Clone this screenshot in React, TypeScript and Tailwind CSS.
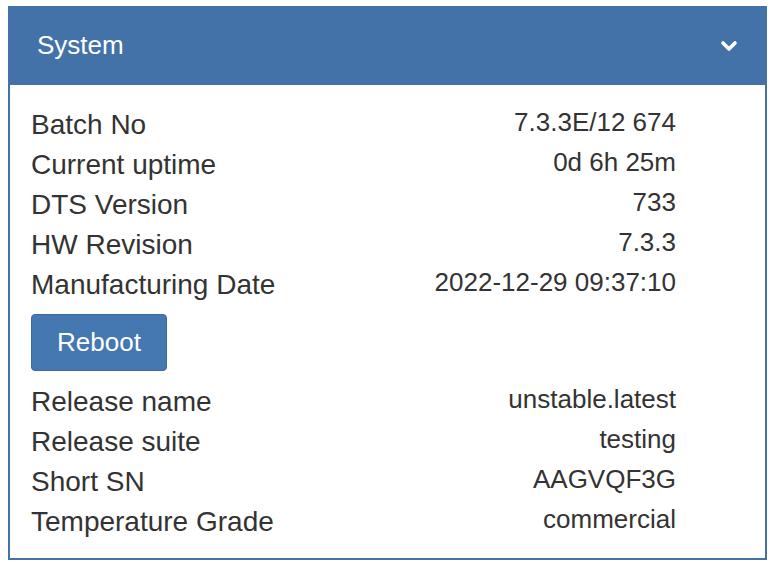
import React from "react";

const rows1: [string, string][] = [
  ["Batch No", "7.3.3E/12 674"],
  ["Current uptime", "0d 6h 25m"],
  ["DTS Version", "733"],
  ["HW Revision", "7.3.3"],
  ["Manufacturing Date", "2022-12-29 09:37:10"],
];
const rows2: [string, string][] = [
  ["Release name", "unstable.latest"],
  ["Release suite", "testing"],
  ["Short SN", "AAGVQF3G"],
  ["Temperature Grade", "commercial"],
];

function Rows({ rows }: { rows: [string, string][] }) {
  return (
    <div className="flex flex-col w-[645px]">
      {rows.map(([k, v]) => (
        <div key={k} className="h-[40px] flex items-center justify-between">
          <span className="text-[28px]">{k}</span>
          <span className="text-[26px] mb-[5px]">{v}</span>
        </div>
      ))}
    </div>
  );
}

export default function App() {
  return (
    <div className="w-[778px] h-[572px] bg-white pt-[6px] pl-[8px]" style={{ fontFamily: '"Liberation Sans", Arial, sans-serif' }}>
      <div className="w-[759px] h-[554px] border-2 border-[#4372a9] flex flex-col">
        <div className="bg-[#4372a9] flex items-center justify-between pl-[29px] pr-[29px] text-white text-[26px] -mt-[2px] -mx-[2px] h-[79px]">
          <span>System</span>
          <svg width="18" height="14" viewBox="0 0 18 14">
            <path d="M3 4 L9 10 L15 4" stroke="white" strokeWidth="3.6" fill="none" strokeLinecap="round" strokeLinejoin="round" />
          </svg>
        </div>
        <div className="flex flex-col pl-[21px] pt-[20px] text-[#333]">
          <Rows rows={rows1} />
          <div className="mt-[9px] mb-[11px]">
            <button className="w-[136px] h-[57px] rounded-[4px] bg-[#4577b0] border border-[#3b6aa0] text-white text-[26px]">
              Reboot
            </button>
          </div>
          <Rows rows={rows2} />
        </div>
      </div>
    </div>
  );
}
